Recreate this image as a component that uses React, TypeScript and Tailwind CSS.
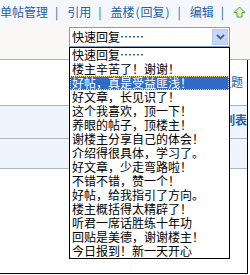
import React from "react";

const items = [
  "快速回复……",
  "楼主辛苦了！谢谢！",
  "好帖，真是受益匪浅！",
  "好文章，长见识了！",
  "这个我喜欢，顶一下！",
  "养眼的帖子，顶楼主！",
  "谢楼主分享自己的体会！",
  "介绍得很具体，学习了。",
  "好文章，少走弯路啦！",
  "不错不错，赞一个！",
  "好帖，给我指引了方向。",
  "楼主概括得太精辟了！",
  "听君一席话胜练十年功",
  "回贴是美德，谢谢楼主！",
  "今日报到！新一天开心",
];

const font = { fontFamily: '"Noto Sans CJK SC", "Noto Sans", sans-serif' };

function Sep() {
  return <span className="ml-[7px] mr-[9px] text-[#1f5fae]">|</span>;
}

export default function App() {
  return (
    <div className="relative w-[250px] h-[275px] overflow-hidden bg-white text-[12px]" style={font}>
      {/* nav row */}
      <div className="h-[24px] flex items-center bg-[#f4f8fc] text-[#1f5fae] leading-[14px] whitespace-nowrap">
        <span>单帖管理</span>
        <Sep />
        <span>引用</span>
        <Sep />
        <span className="flex">
          盖楼<span className="inline-block w-[6px] text-center">(</span>回复<span className="inline-block w-[6px] text-center">)</span>
        </span>
        <Sep />
        <span>编辑</span>
        <Sep />
        <svg width="13" height="12" viewBox="0 0 13 12">
          <path d="M6.5 1 L12 6.5 L9 6.5 L9 11 L4 11 L4 6.5 L1 6.5 Z" fill="#dff3c8" stroke="#5c9e3a" strokeWidth="1" strokeLinejoin="round" />
        </svg>
      </div>
      {/* select row */}
      <div className="h-[36px] bg-[#fbf9f8] border-b border-[#a9b6c2] pt-[3px]">
        <div className="ml-[69px] w-[161px] h-[20px] border border-[#7f9db9] bg-white flex items-stretch">
          <div className="flex-1 pl-[2px] leading-[18px] text-black">快速回复……</div>
          <div className="w-[16px] my-[1px] mr-[1px] bg-[#c5d5fb] border border-[#b8c9f3] flex items-center justify-center">
            <svg width="9" height="6" viewBox="0 0 9 6">
              <path d="M1 1 L4.5 4.5 L8 1" fill="none" stroke="#4a5f8c" strokeWidth="1.8" />
            </svg>
          </div>
        </div>
      </div>
      {/* content rows */}
      <div className="mr-[2px] border-r border-black">
        <div className="h-[46px] bg-white border-b border-[#a9b6c2] pt-[15px] pr-[4px] flex justify-end">
          <span className="leading-[14px] text-[#2558a8]">主题</span>
        </div>
        <div className="h-[33px] bg-[#eef5fc] border-b border-[#a9b6c2] pt-[7px] flex justify-end">
          <span className="leading-[14px] font-bold text-[#1f5fae]">返回列表</span>
        </div>
        <div className="h-[30px] bg-[#eef5fc] border-b border-[#a9b6c2]" />
        <div className="h-[105px] bg-white border-b border-black" />
      </div>
      {/* dropdown list overlay */}
      <div className="absolute left-[69px] top-[47px] w-[161px] border border-black bg-white">
        {items.map((t, i) => (
          <div
            key={i}
            className={
              i === 2
                ? "h-[14px] leading-[14px] pl-[2px] bg-[#316ac5] text-white whitespace-nowrap outline outline-1 outline-dotted outline-offset-[-1px] outline-[#f4d88a]"
                : "h-[14px] leading-[14px] pl-[2px] text-black whitespace-nowrap"
            }
          >
            {t}
          </div>
        ))}
      </div>
    </div>
  );
}
